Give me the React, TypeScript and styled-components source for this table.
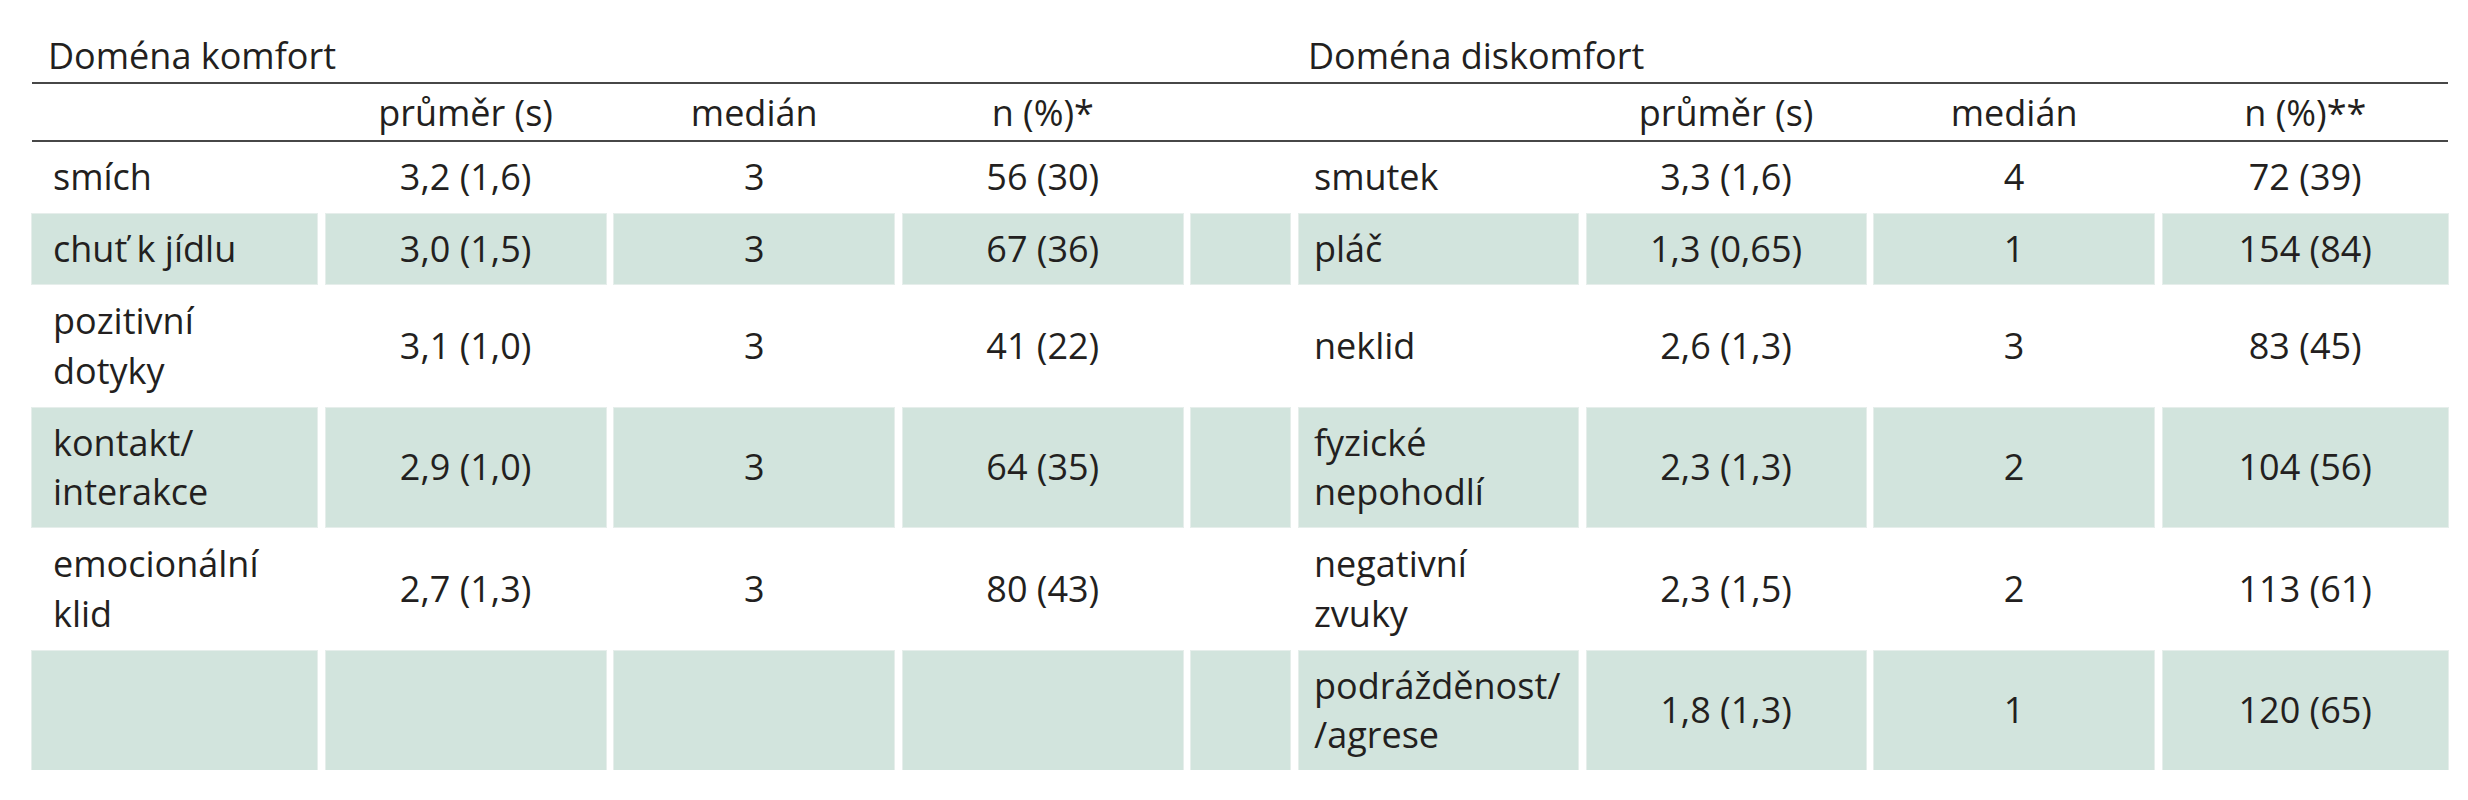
import React from 'react';
import styled, { createGlobalStyle } from 'styled-components';

const GlobalStyle = createGlobalStyle`
  html, body { margin: 0; padding: 0; background: #ffffff; }
  body {
    font-family: "Open Sans", "Noto Sans", sans-serif;
    color: #231f20;
    font-size: 36px;
  }
`;

const COLS = '285px 280px 280px 280px 99px 279px 279px 280px 285px';
const RULE = '#474747';

const Page = styled.div`
  width: 2416px;
  padding: 0 20px 0 32px;
`;

const TitleRow = styled.div`
  display: flex;
`;

const TitleCell = styled.div<{ $w: number; $pad: number }>`
  width: ${(p) => p.$w}px;
  padding: 31px 0 1px ${(p) => p.$pad}px;
  box-sizing: border-box;
  line-height: 49.5px;
  border-bottom: 2px solid ${RULE};
  white-space: nowrap;
`;

const HeaderRow = styled.div`
  display: grid;
  grid-template-columns: ${COLS};
  column-gap: 8.6px;
  padding: 4px 0 3px;
  line-height: 49.5px;
  border-bottom: 2.5px solid ${RULE};
`;

const HeadCell = styled.div`
  text-align: center;
  white-space: nowrap;
`;

const Body = styled.div`
  display: flex;
  flex-direction: column;
  row-gap: 2.5px;
`;

const Row = styled.div`
  display: grid;
  grid-template-columns: ${COLS};
  column-gap: 8.6px;
`;

const Cell = styled.div<{ $shade: boolean; $label?: number }>`
  display: flex;
  flex-direction: column;
  justify-content: center;
  align-items: ${(p) => (p.$label !== undefined ? 'flex-start' : 'center')};
  padding: 10px 0 10px ${(p) => p.$label ?? 0}px;
  line-height: 49.5px;
  white-space: nowrap;
  background: ${(p) => (p.$shade ? '#d2e4dd' : 'transparent')};
  box-shadow: ${(p) => (p.$shade ? '0 0 0 1px #e6eeeb' : 'none')};
`;

type Side = { label: string[]; mean: string; median: string; n: string };
type RowData = { left: Side | null; right: Side; shade: boolean };

const rows: RowData[] = [
  {
    left: { label: ['smích'], mean: '3,2 (1,6)', median: '3', n: '56 (30)' },
    right: { label: ['smutek'], mean: '3,3 (1,6)', median: '4', n: '72 (39)' },
    shade: false,
  },
  {
    left: { label: ['chuť k jídlu'], mean: '3,0 (1,5)', median: '3', n: '67 (36)' },
    right: { label: ['pláč'], mean: '1,3 (0,65)', median: '1', n: '154 (84)' },
    shade: true,
  },
  {
    left: { label: ['pozitivní', 'dotyky'], mean: '3,1 (1,0)', median: '3', n: '41 (22)' },
    right: { label: ['neklid'], mean: '2,6 (1,3)', median: '3', n: '83 (45)' },
    shade: false,
  },
  {
    left: { label: ['kontakt/', 'interakce'], mean: '2,9 (1,0)', median: '3', n: '64 (35)' },
    right: { label: ['fyzické', 'nepohodlí'], mean: '2,3 (1,3)', median: '2', n: '104 (56)' },
    shade: true,
  },
  {
    left: { label: ['emocionální', 'klid'], mean: '2,7 (1,3)', median: '3', n: '80 (43)' },
    right: { label: ['negativní', 'zvuky'], mean: '2,3 (1,5)', median: '2', n: '113 (61)' },
    shade: false,
  },
  {
    left: null,
    right: { label: ['podrážděnost/', '/agrese'], mean: '1,8 (1,3)', median: '1', n: '120 (65)' },
    shade: true,
  },
];

const SideCells: React.FC<{ side: Side | null; shade: boolean; pad: number }> = ({ side, shade, pad }) => (
  <>
    <Cell $shade={shade} $label={pad}>
      {side?.label.map((l, i) => <span key={i}>{l}</span>)}
    </Cell>
    <Cell $shade={shade}>{side?.mean}</Cell>
    <Cell $shade={shade}>{side?.median}</Cell>
    <Cell $shade={shade}>{side?.n}</Cell>
  </>
);

export default function App() {
  return (
    <>
      <GlobalStyle />
      <Page>
        <TitleRow>
          <TitleCell $w={1154} $pad={16}>Doména komfort</TitleCell>
          <TitleCell $w={1262} $pad={122}>Doména diskomfort</TitleCell>
        </TitleRow>
        <HeaderRow>
          <HeadCell />
          <HeadCell>průměr (s)</HeadCell>
          <HeadCell>medián</HeadCell>
          <HeadCell>n (%)*</HeadCell>
          <HeadCell />
          <HeadCell />
          <HeadCell>průměr (s)</HeadCell>
          <HeadCell>medián</HeadCell>
          <HeadCell>n (%)**</HeadCell>
        </HeaderRow>
        <Body>
          {rows.map((r, i) => (
            <Row key={i}>
              <SideCells side={r.left} shade={r.shade} pad={21} />
              <Cell $shade={r.shade} />
              <SideCells side={r.right} shade={r.shade} pad={15} />
            </Row>
          ))}
        </Body>
      </Page>
    </>
  );
}
